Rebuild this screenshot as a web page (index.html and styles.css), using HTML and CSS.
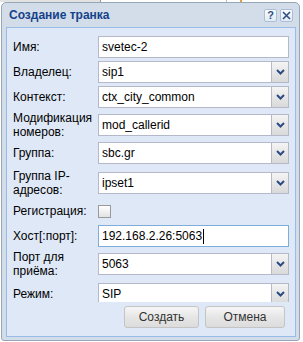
FILE: index.html
```html
<!DOCTYPE html>
<html lang="ru">

<head>
    <meta charset="UTF-8">
    <meta name="viewport" content="width=device-width, initial-scale=1.0">
    <title>Создание транка</title>
    <link rel="stylesheet" href="styles.css">
</head>

<body>

    <div class="desk"></div>

    <div class="window">
        <div class="window-header">
            <span class="window-title">Создание транка</span>
            <span class="tools">
                <span class="tool tool-help">?</span>
                <span class="tool tool-close">
                    <svg width="9" height="9" viewBox="0 0 9 9">
                        <path d="M1 1 L8 8 M8 1 L1 8" stroke="#2f4f86" stroke-width="1.6" fill="none" />
                    </svg>
                </span>
            </span>
        </div>

        <div class="window-body">
            <form class="form">
                <div class="row row-first">
                    <label>Имя:</label>
                    <div class="field">svetec-2</div>
                </div>
                <div class="row">
                    <label>Владелец:</label>
                    <div class="field combo">
                        <span class="combo-value">sip1</span>
                        <span class="trigger"><svg width="9" height="6" viewBox="0 0 9 6"><path d="M1 1 L4.5 4.5 L8 1" stroke="#2c4b82" stroke-width="2" fill="none" /></svg></span>
                    </div>
                </div>
                <div class="row">
                    <label>Контекст:</label>
                    <div class="field combo">
                        <span class="combo-value">ctx_city_common</span>
                        <span class="trigger"><svg width="9" height="6" viewBox="0 0 9 6"><path d="M1 1 L4.5 4.5 L8 1" stroke="#2c4b82" stroke-width="2" fill="none" /></svg></span>
                    </div>
                </div>
                <div class="row row-tall">
                    <label>Модификация номеров:</label>
                    <div class="field combo">
                        <span class="combo-value">mod_callerid</span>
                        <span class="trigger"><svg width="9" height="6" viewBox="0 0 9 6"><path d="M1 1 L4.5 4.5 L8 1" stroke="#2c4b82" stroke-width="2" fill="none" /></svg></span>
                    </div>
                </div>
                <div class="row">
                    <label>Группа:</label>
                    <div class="field combo">
                        <span class="combo-value">sbc.gr</span>
                        <span class="trigger"><svg width="9" height="6" viewBox="0 0 9 6"><path d="M1 1 L4.5 4.5 L8 1" stroke="#2c4b82" stroke-width="2" fill="none" /></svg></span>
                    </div>
                </div>
                <div class="row row-tall row-loose">
                    <label>Группа IP-адресов:</label>
                    <div class="field combo">
                        <span class="combo-value">ipset1</span>
                        <span class="trigger"><svg width="9" height="6" viewBox="0 0 9 6"><path d="M1 1 L4.5 4.5 L8 1" stroke="#2c4b82" stroke-width="2" fill="none" /></svg></span>
                    </div>
                </div>
                <div class="row">
                    <label>Регистрация:</label>
                    <span class="checkbox"></span>
                </div>
                <div class="row">
                    <label>Хост[:порт]:</label>
                    <div class="field focused">192.168.2.26:5063<span class="caret"></span></div>
                </div>
                <div class="row row-tall">
                    <label>Порт для приёма:</label>
                    <div class="field combo">
                        <span class="combo-value">5063</span>
                        <span class="trigger"><svg width="9" height="6" viewBox="0 0 9 6"><path d="M1 1 L4.5 4.5 L8 1" stroke="#2c4b82" stroke-width="2" fill="none" /></svg></span>
                    </div>
                </div>
                <div class="row row-last">
                    <label>Режим:</label>
                    <div class="field combo">
                        <span class="combo-value">SIP</span>
                        <span class="trigger"><svg width="9" height="6" viewBox="0 0 9 6"><path d="M1 1 L4.5 4.5 L8 1" stroke="#2c4b82" stroke-width="2" fill="none" /></svg></span>
                    </div>
                </div>
            </form>

            <div class="buttons">
                <button type="button" class="btn btn-create">Создать</button>
                <button type="button" class="btn btn-cancel">Отмена</button>
            </div>
        </div>
    </div>

</body>

</html>
```

FILE: styles.css
```css
* {
    box-sizing: border-box;
}

body {
    margin: 0;
    background: #fff;
    font-family: "Liberation Sans", Arial, sans-serif;
    font-size: 12px;
    color: #000;
}

.desk {
    height: 2px;
    background: linear-gradient(to right, #e2e2e2 0 100px, #9a9a9a 100px 101px, #fff 101px 226px, #b8b8b8 226px 227px, #fff 227px 240px, #e0a040 240px 242px, #fff 242px);
}

.window {
    width: 299px;
    height: 339px;
    margin-left: 1px;
    padding: 0 3px 3px 4px;
    border: 1px solid #98a6b8;
    border-radius: 5px 5px 3px 3px;
    background: #d2dde9;
}

.window-header {
    display: flex;
    align-items: center;
    justify-content: space-between;
    height: 24px;
    padding: 0 3px;
}

.window-title {
    font-size: 12px;
    font-weight: bold;
    color: #15428b;
}

.tools {
    display: flex;
    gap: 3px;
}

.tool {
    display: flex;
    align-items: center;
    justify-content: center;
    width: 13px;
    height: 13px;
    border: 1px solid #a9bfd9;
    border-radius: 2px;
    background: linear-gradient(#fbfcfe, #e2eaf4);
}

.tool-help {
    font-size: 11px;
    font-weight: bold;
    color: #2f4f86;
}

.window-body {
    height: 310px;
    border: 1px solid #99bbe8;
    background: #dfe8f6;
}

.form {
    height: 274px;
    overflow: hidden;
    padding: 8px 6px 0;
}

.row {
    display: flex;
    align-items: center;
    min-height: 22px;
    margin-top: 3px;
}

.row-first {
    margin-top: 0;
}

.row-tall {
    min-height: 28px;
}

.row-loose,
.row-last {
    margin-top: 5px;
}

.row label {
    width: 85px;
    flex: none;
    line-height: 14px;
    padding-right: 6px;
}

.field {
    display: flex;
    align-items: center;
    width: 191px;
    height: 22px;
    padding-left: 3px;
    border: 1px solid #b5b8c8;
    background: #fff;
    white-space: nowrap;
}

.focused {
    border-color: #7eadd9;
}

.caret {
    display: inline-block;
    width: 1px;
    height: 15px;
    margin-left: 1px;
    background: #000;
}

.combo {
    padding-right: 0;
}

.combo-value {
    flex: 1;
}

.trigger {
    display: flex;
    align-items: center;
    justify-content: center;
    width: 17px;
    height: 100%;
    border-left: 1px solid #b5b8c8;
    background: linear-gradient(#f4f4f4, #d9d9d9);
}

.checkbox {
    width: 13px;
    height: 13px;
    border: 1px solid #9a9a9a;
    background: linear-gradient(#fff, #e3e3e3);
}

.buttons {
    display: flex;
    justify-content: flex-end;
    gap: 6px;
    padding: 4px 10px 0 0;
}

.btn {
    height: 22px;
    padding: 0;
    border: 1px solid #c4c4c4;
    border-radius: 3px;
    background: linear-gradient(#f6f6f6, #e6e6e6 50%, #dcdcdc);
    font-family: inherit;
    font-size: 12px;
    color: #333;
}

.btn-create {
    width: 75px;
}

.btn-cancel {
    width: 80px;
}
```
